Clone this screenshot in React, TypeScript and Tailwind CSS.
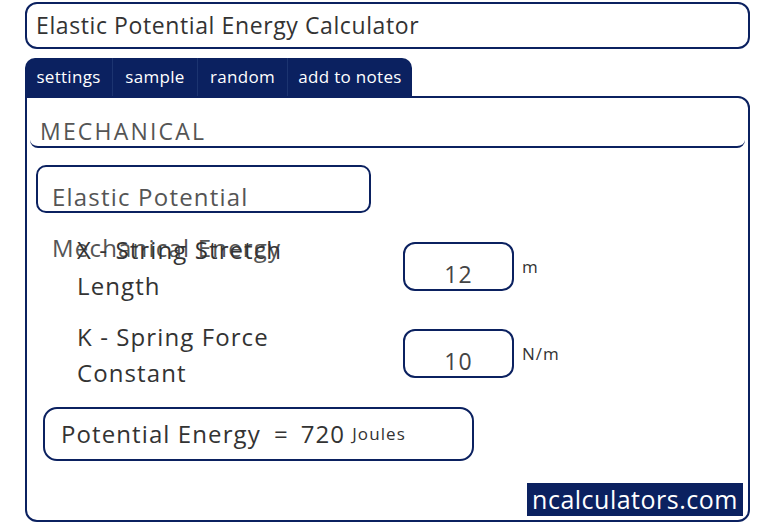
import React from "react";

const NAVY = "border-[#0b2160]";

export default function App() {
  return (
    <div
      className="w-[770px] h-[523px] bg-white text-[#333] overflow-hidden"
      style={{ fontFamily: '"Open Sans", "Liberation Sans", sans-serif' }}
    >
      <div className="ml-[25px] w-[725px]">
        {/* Title */}
        <div className={`mt-[2px] h-[47px] border-2 ${NAVY} rounded-[12px] flex items-center pl-[9px] text-[23px] tracking-[0.6px] text-[#333]`}>
          Elastic Potential Energy Calculator
        </div>

        {/* Tabs */}
        <div className="mt-[9px] flex">
          <div className="flex h-[38px] bg-[#0b2160] rounded-t-[10px] text-white text-[17px] tracking-[0.3px]">
            <div className="w-[88px] flex items-center justify-center border-r border-[#1c3470]">settings</div>
            <div className="w-[85px] flex items-center justify-center border-r border-[#1c3470]">sample</div>
            <div className="w-[90px] flex items-center justify-center border-r border-[#1c3470]">random</div>
            <div className="w-[124px] flex items-center justify-center">add to notes</div>
          </div>
        </div>

        {/* Panel */}
        <div className={`h-[426px] border-2 ${NAVY} rounded-tr-[12px] rounded-b-[12px] flex flex-col`}>
          <div className={`mx-[3px] mt-[18px] h-[32px] border-b-2 ${NAVY} rounded-b-[8px] pl-[10px] text-[23px] tracking-[2.2px] leading-[30px] text-[#555]`}>
            MECHANICAL
          </div>

          <div className={`ml-[9px] mt-[17px] w-[335px] h-[48px] border-2 ${NAVY} rounded-[10px] pl-[14px] pt-[4px] text-[24px] tracking-[1.2px] leading-[51px] text-[#555]`}>
            Elastic Potential Mechanical Energy
          </div>

          {/* Rows */}
          <div className="mt-[19px] flex flex-col gap-[15px]">
            <Row label1="X - String Stretch" label2="Length" value="12" unit="m" />
            <Row label1="K - Spring Force" label2="Constant" value="10" unit="N/m" />
          </div>

          <div className={`ml-[16px] mt-[16px] w-[431px] h-[54px] border-2 ${NAVY} rounded-[14px] flex items-center pl-[16px] text-[24px] tracking-[1.1px] text-[#333]`}>
            <span>Potential Energy</span>
            <span className="ml-[13px]">=</span>
            <span className="ml-[12px]">720</span>
            <span className="ml-[7px] text-[17px] tracking-[1.1px]">Joules</span>
          </div>

          <div className="mt-auto mb-[4px] self-end mr-[5px] w-[216px] h-[33px] bg-[#0b2160] text-white text-[25px] tracking-[0.5px] flex items-center justify-center">
            ncalculators.com
          </div>
        </div>
      </div>
    </div>
  );
}

function Row({ label1, label2, value, unit }: { label1: string; label2: string; value: string; unit: string }) {
  return (
    <div className="flex items-center h-[72px]">
      <div className="ml-[50px] w-[326px] text-[24px] tracking-[1.1px] leading-[36px] text-[#333]">
        <div>{label1}</div>
        <div>{label2}</div>
      </div>
      <div className={`-mt-[3px] w-[111px] h-[49px] border-2 ${NAVY} rounded-[12px] flex items-center justify-center pt-[16px] text-[23px] tracking-[1px] text-[#444]`}>
        {value}
      </div>
      <div className="ml-[8px] -mt-[2px] text-[17px] tracking-[1px] text-[#333]">{unit}</div>
    </div>
  );
}
